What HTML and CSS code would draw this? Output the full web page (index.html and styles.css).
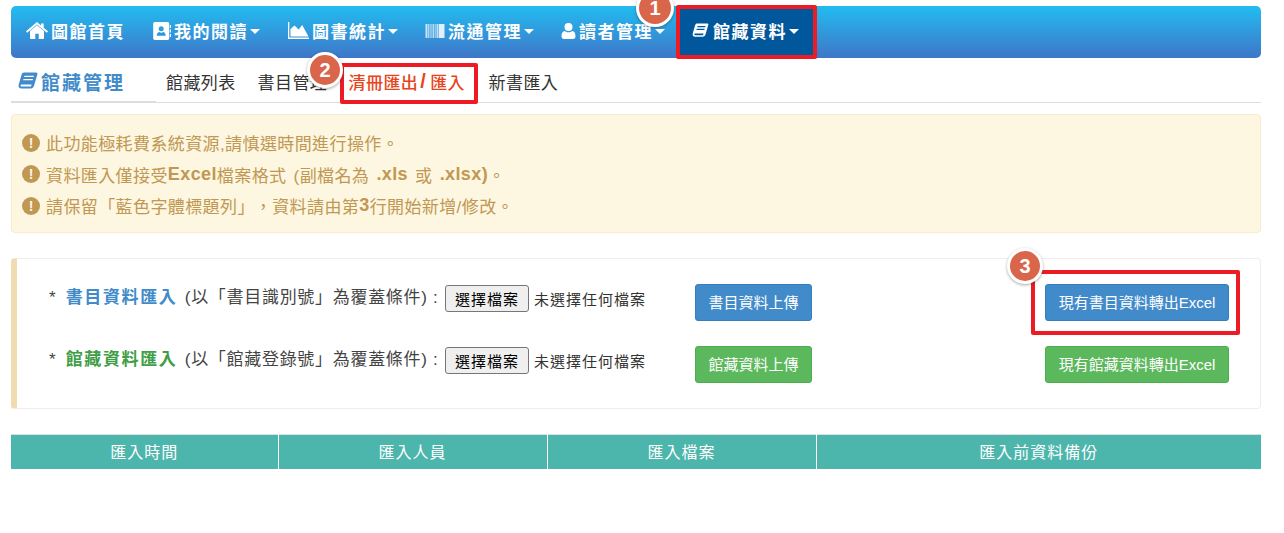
FILE: index.html
```html
<!DOCTYPE html>
<html lang="zh-Hant">
<head>
<meta charset="utf-8">
<title>清冊匯出/匯入</title>
<link rel="stylesheet" href="styles.css">
</head>
<body>
<svg width="0" height="0" class="defs">
  <symbol id="i-book" viewBox="0 0 20 18"><path d="M6 .5h12.200c1 0 1.500.8 1.200 1.700l-3.300 11.400c-.5 1.700-1.500 2.900-3.400 2.900H3.400C1.400 16.500.2 15 .6 13L3.600 2.500C4 1.200 4.800.5 6 .5zM6.500 3.700l-.4 1.300h9.500l.4-1.300zM5.500 7l-.4 1.300h9.500L15 7zM3.800 12.500c-.8 0-1.300.5-1.300 1.100s.5 1 1.200 1h9.300c.2-.6.3-1.400.7-2.100z" fill-rule="evenodd"/></symbol>
</svg>
<div class="page">
  <nav class="navbar">
    <a class="nav-item"><svg class="ico ico-home" viewBox="0 0 22 18"><path d="M11 3.200l7 5.900v6.900c0 .6-.4 1-1 1h-4.300v-5.200H9.300V17H5c-.6 0-1-.4-1-1V9.100zM11 0l4 3.400V1.500h2.700v4.200L22 9.300l-1.200 1.400L11 2.500 1.200 10.700 0 9.300z"/></svg>圖館首頁</a>
    <a class="nav-item"><svg class="ico ico-contact" viewBox="0 0 18 18"><path fill-rule="evenodd" d="M2 0h12.500c1 0 1.700.8 1.700 1.700v14.600c0 1-.7 1.700-1.700 1.700H2c-1 0-1.800-.8-1.800-1.700V1.700C.2.800 1 0 2 0zm6.200 4.200a2.500 2.500 0 1 0 0 5 2.500 2.500 0 0 0 0-5zM3.700 13.800h9c0-2.300-1.500-3.700-2.500-3.700-.6.400-1.200.6-2 .6s-1.400-.2-2-.6c-1 0-2.500 1.400-2.500 3.700z"/><path d="M16.800 3h1.200v3h-1.200zM16.800 7.500h1.200v3h-1.200zM16.800 12h1.200v3h-1.200z"/></svg>我的閱讀<i class="caret"></i></a>
    <a class="nav-item"><svg class="ico ico-chart" viewBox="0 0 21 17"><path d="M0 0h1.300v15.500H21V17H0z"/><path d="M2.500 14.500V7l4-3.500 4.200 4 3.500-4.500 6.300 11.500z"/></svg>圖書統計<i class="caret"></i></a>
    <a class="nav-item"><svg class="ico ico-bars" viewBox="0 0 19 14"><path d="M0 0h2v14H0z" opacity=".75"/><path d="M2.500 0h1.500v14H2.500z" opacity=".6"/><path d="M4.500 0h2v14h-2z" opacity=".4"/><path d="M7 0h1.500v14H7z" opacity=".65"/><path d="M9 0h1.500v14H9z" opacity=".45"/><path d="M11 0h2v14h-2z" opacity=".7"/><path d="M13.500 0h5.500v14h-5.500z" opacity=".85"/></svg>流通管理<i class="caret"></i></a>
    <a class="nav-item"><svg class="ico ico-user" viewBox="0 0 14 16"><path d="M7 0a4 4 0 1 1 0 8 4 4 0 0 1 0-8zM3.200 8c1 .8 2.300 1.300 3.800 1.300s2.800-.5 3.800-1.300c2 0 3.200 2.200 3.200 5.200 0 1.800-1 2.800-2.600 2.800H2.600C1 16 0 15 0 13.200 0 10.200 1.200 8 3.200 8z"/></svg>讀者管理<i class="caret"></i></a>
    <a class="nav-item active"><svg class="ico ico-book"><use href="#i-book"/></svg>館藏資料<i class="caret"></i></a>
  </nav>

  <div class="tabs">
    <h1 class="tabs-title"><svg class="title-book"><use href="#i-book"/></svg>館藏管理</h1>
    <ul class="tab-list">
      <li class="tab">館藏列表</li>
      <li class="tab tab-narrow">書目管理</li>
      <li class="tab current">清冊匯出<b class="slash">/</b>匯入</li>
      <li class="tab">新書匯入</li>
    </ul>
  </div>

  <div class="alert">
    <p class="alert-line"><i class="bang">!</i>此功能極耗費系統資源,請慎選時間進行操作。</p>
    <p class="alert-line"><i class="bang">!</i>資料匯入僅接受<b>Excel</b>檔案格式 (副檔名為 <b>.xls</b> 或 <b>.xlsx)</b>。</p>
    <p class="alert-line"><i class="bang">!</i>請保留「藍色字體標題列」，資料請由第<b>3</b>行開始新增/修改。</p>
  </div>

  <section class="panel">
    <div class="row">
      <div class="row-label">* <b class="blue">書目資料匯入</b> (以「書目識別號」為覆蓋條件) :</div>
      <span class="file-btn">選擇檔案</span><span class="file-none">未選擇任何檔案</span>
      <span class="btn btn-blue btn-up">書目資料上傳</span>
      <span class="btn btn-blue btn-out">現有書目資料轉出Excel</span>
    </div>
    <div class="row">
      <div class="row-label">* <b class="green">館藏資料匯入</b> (以「館藏登錄號」為覆蓋條件) :</div>
      <span class="file-btn">選擇檔案</span><span class="file-none">未選擇任何檔案</span>
      <span class="btn btn-green btn-up">館藏資料上傳</span>
      <span class="btn btn-green btn-out">現有館藏資料轉出Excel</span>
    </div>
  </section>

  <table class="log">
    <thead><tr><th class="c1">匯入時間</th><th class="c2">匯入人員</th><th class="c2">匯入檔案</th><th>匯入前資料備份</th></tr></thead>
  </table>
</div>

<div class="mark box-nav"></div>
<div class="mark box-tab"></div>
<div class="mark box-excel"></div>
<span class="pin pin-1">1</span>
<span class="pin pin-2">2</span>
<span class="pin pin-3">3</span>
</body>
</html>
```

FILE: styles.css
```css
* { box-sizing: border-box; }
html, body { margin: 0; height: 533px; overflow: hidden; background: #fff; }
body {
  position: relative;
  font-family: "Liberation Sans", "Noto Sans CJK TC", sans-serif;
  font-size: 16px;
  color: #333;
  text-spacing-trim: space-all;
}
.defs { position: absolute; }
.page { width: 1250px; margin-left: 11px; padding-top: 6px; }

/* navbar */
.navbar {
  display: flex;
  height: 52px;
  padding-left: 6px;
  border-radius: 5px;
  background: linear-gradient(#22bcf0, #3f76c8);
}
.nav-item {
  display: flex;
  align-items: center;
  padding: 0 0 3px 9px;
  color: #fff;
  font-size: 17px;
  font-weight: 700;
  letter-spacing: 1.500px;
  white-space: nowrap;
}
.nav-item:nth-child(1) { width: 127px; }
.nav-item:nth-child(2) { width: 135px; }
.nav-item:nth-child(3) { width: 137px; }
.nav-item:nth-child(4) { width: 136px; }
.nav-item:nth-child(5) { width: 127px; }
.nav-item.active { width: 136px; background: #01579b; padding-left: 13px; }
.ico { fill: #fff; flex: none; margin-right: 3px; }
.ico-home { width: 22px; height: 18px; }
.ico-contact { width: 18px; height: 18px; }
.ico-chart { width: 21px; height: 17px; }
.ico-bars { width: 20px; height: 14px; }
.ico-user { width: 15px; height: 16px; }
.ico-book { width: 17px; height: 15px; margin-right: 4px; }
.caret {
  width: 0; height: 0; margin-left: 2px; margin-top: 2px;
  border-left: 5px solid transparent;
  border-right: 5px solid transparent;
  border-top: 5px solid #fff;
}

/* tabs */
.tabs { display: flex; height: 45px; padding-top: 2px; }
.tabs-title {
  display: flex;
  align-items: center;
  width: 145px;
  margin: 0;
  padding: 1px 0 0 7px;
  border-bottom: 2px solid #ddd;
  color: #428bca;
  font-size: 19px;
  font-weight: 700;
  letter-spacing: 2px;
}
.title-book { width: 20px; height: 18px; margin-right: 3px; fill: #428bca; }
.tab-list { display: flex; flex: 1; margin: 0; padding: 0 0 0 10px; list-style: none; border-bottom: 1px solid #ddd; }
.tab { display: flex; align-items: center; margin-right: 22px; font-size: 17px; letter-spacing: .4px; color: #333; white-space: nowrap; }
.tab-narrow { width: 69px; margin-right: 22px; }
.tab.current { width: 118px; margin-right: 22px; color: #e8441a; font-weight: 500; }
.slash { margin: 0 4px 0 2px; font-size: 20px; }

/* alert */
.alert {
  height: 119px;
  margin-top: 11px;
  padding: 12px 10px;
  background: #fdf6e0;
  border: 1px solid #faebcc;
  border-radius: 4px;
  color: #c09853;
  font-size: 17px;
  letter-spacing: .4px;
  word-spacing: 2px;
}
.alert-line { display: flex; align-items: center; height: 31.500px; margin: 0; white-space: pre; }
.alert-line b { font-size: 18px; font-weight: 700; }
.bang {
  display: inline-flex; align-items: center; justify-content: center;
  width: 18px; height: 18px; margin-right: 6px;
  border-radius: 50%;
  background: #c09853;
  color: #fdf6e0;
  font-size: 14px; font-weight: 700; font-style: normal; letter-spacing: 0;
}

/* panel */
.panel {
  height: 151px;
  margin-top: 25px;
  padding-top: 25px;
  border: 1px solid #eee;
  border-left: 6px solid #f0dcb0;
  border-radius: 4px;
}
.row { display: flex; align-items: center; height: 37px; margin-bottom: 25px; padding-left: 32px; white-space: nowrap; }
.row-label { width: 396px; margin-top: -14px; font-size: 17px; letter-spacing: .7px; color: #444; }
.row-label b { margin: 0 2px 0 4px; letter-spacing: 1.600px; font-weight: 700; }
.blue { color: #428bca; }
.green { color: #3f9e46; }
.file-btn {
  display: inline-flex; align-items: center; justify-content: center;
  width: 84px; height: 27px; margin-top: -8px;
  border: 1px solid #767676; border-radius: 3px;
  background: #efefef;
  font-size: 15px; color: #000; letter-spacing: 1px;
}
.file-none { width: 166px; margin-top: -8px; padding-left: 5px; font-size: 15px; letter-spacing: 1px; color: #333; }
.btn {
  display: inline-flex; align-items: center; justify-content: center;
  height: 37px;
  padding-bottom: 2px;
  border-radius: 3px;
  color: #fff;
  font-size: 15px;
}
.btn-up { width: 117px; }
.btn-out { width: 184px; margin-left: 233px; }
.btn-blue { background: #428bca; border: 1px solid #357ebd; }
.btn-green { background: #5cb85c; border: 1px solid #4cae4c; }

/* table */
.log {
  width: 100%;
  margin-top: 25px;
  border-collapse: collapse;
  table-layout: fixed;
  border-top: 1px solid #ddd;
}
.log th {
  height: 34px;
  padding: 0 0 2px;
  background: #4db6ac;
  border-right: 1px solid #fff;
  color: #fff;
  font-size: 16px;
  font-weight: 400;
  letter-spacing: 1px;
}
.log th:last-child { border-right: 0; }
.c1 { width: 267px; }
.c2 { width: 269px; }

/* annotations */
.mark { position: absolute; border: 4px solid #ed1c24; border-radius: 2px; }
.box-nav { left: 676px; top: 5px; width: 141px; height: 54px; }
.box-tab { left: 340px; top: 63px; width: 138px; height: 41px; }
.box-excel { left: 1031px; top: 270px; width: 209px; height: 65px; }
.pin {
  position: absolute;
  display: flex; align-items: center; justify-content: center;
  width: 36px; height: 36px;
  border: 3px solid #fff;
  border-radius: 50%;
  background: #d9654a;
  color: #fff;
  font-size: 20px;
  font-weight: 700;
  box-shadow: 0 1px 3px rgba(0,0,0,.35);
}
.pin-1 { left: 636px; top: -11px; width: 38px; height: 38px; }
.pin-2 { left: 307px; top: 52px; }
.pin-3 { left: 1007px; top: 248px; }
```
